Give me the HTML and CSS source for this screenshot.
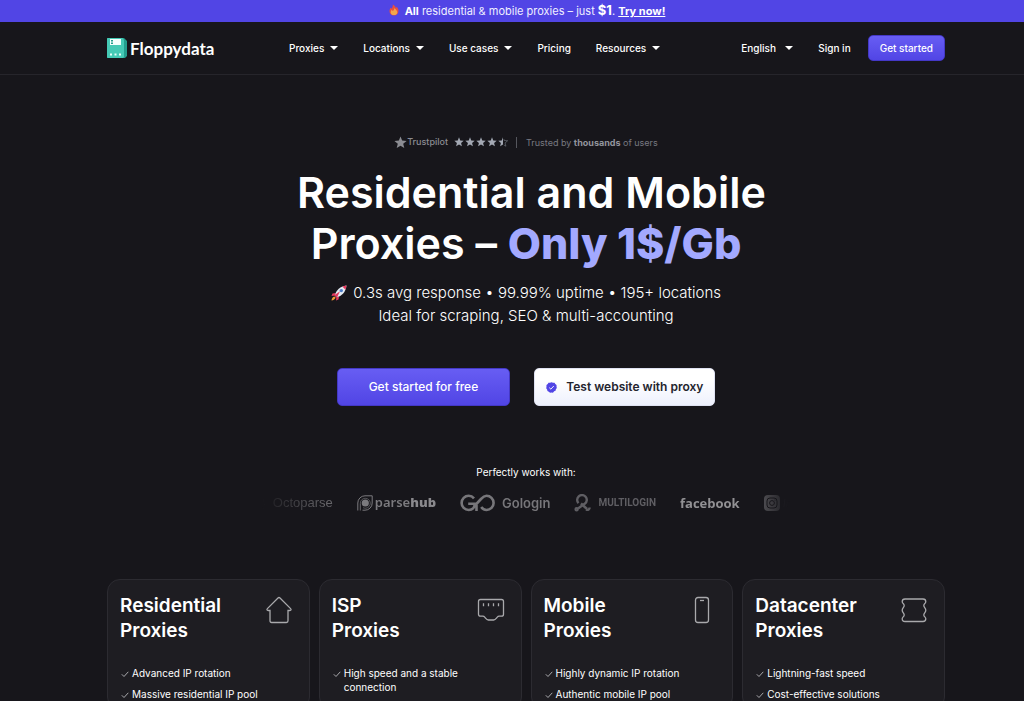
FILE: index.html
```html
<!DOCTYPE html>
<html lang="en">
<head>
<meta charset="utf-8">
<meta name="viewport" content="width=device-width, initial-scale=1">
<title>Floppydata – Residential and Mobile Proxies</title>
<link rel="stylesheet" href="styles.css">
</head>
<body>
<svg class="sprite" aria-hidden="true">
  <symbol id="star" viewBox="0 0 12 12"><path d="M6 .4l1.500 3.800 4.100.3-3.100 2.600 1 4L6 8.900l-3.500 2.200 1-4L.4 4.500l4.100-.3z"/></symbol>
  <symbol id="check" viewBox="0 0 8 8"><path d="M.8 4.300L3 6.500 7.300 1.800" fill="none" stroke="currentColor"/></symbol>
</svg>

<aside class="promo">
  <svg class="promo-icon" viewBox="0 0 12 14" aria-hidden="true">
    <path d="M4.500.5C7.500 2 8 3.500 8.200 5L9.300 3.200C11 5 11.700 7 11.200 9.500 10.700 12.300 8.500 13.500 6 13.500 3 13.500.8 11.700.6 8.800.5 7 1.200 5.300 1.800 4.200L2.900 5.600C4.200 4.200 4.900 2.600 4.500.5z" fill="#e8503e"/>
    <path d="M6.500 4.500C8.500 7 10.300 7.800 10 10.300 9.700 12.400 8 13.100 6 13.100 3.800 13.100 2 12 2 10 2 8.600 2.500 7.500 3.200 6.600L4.600 8.200C5.700 7.300 6.500 6.200 6.500 4.500z" fill="#f2a64b"/>
  </svg>
  <p><b>All</b> residential &amp; mobile proxies – just <b class="promo-price">$1</b>. <a href="#try">Try now!</a></p>
</aside>

<header class="header">
  <a class="logo" href="#home">
    <svg class="logo-mark" viewBox="0 0 20 20" aria-hidden="true">
      <path d="M0 1a1 1 0 0 1 1-1h16l3 3v15l-2 2H1a1 1 0 0 1-1-1z" fill="#249e8e"/>
      <path d="M0 1a1 1 0 0 1 1-1h14.500L17 2v17l-1 1H1a1 1 0 0 1-1-1z" fill="#45c9b5"/>
      <path d="M3 1h11v6H3z" fill="#f4fffd"/>
      <path d="M4 2h2v1.500H4zM4 4.500h2V6H4z" fill="#249e8e"/>
      <path d="M3 15.500h2v2H3zM7.500 15.500h2v2h-2zM12 15.500h2v2h-2z" fill="#e6fffa"/>
    </svg>
    <span>Floppydata</span>
  </a>
  <nav class="nav" aria-label="Main">
    <button class="nav-item has-menu" type="button">Proxies</button>
    <button class="nav-item has-menu" type="button">Locations</button>
    <button class="nav-item has-menu" type="button">Use cases</button>
    <a class="nav-item" href="#pricing">Pricing</a>
    <button class="nav-item has-menu" type="button">Resources</button>
  </nav>
  <div class="account">
    <div class="language has-menu">
      <select class="nav-item" aria-label="Language"><option>English</option></select>
    </div>
    <a class="nav-item" href="#signin">Sign in</a>
    <a class="btn btn-small btn-primary" href="#start">Get started</a>
  </div>
</header>

<main>
  <section class="hero">
    <div class="trust">
      <span class="trustpilot"><svg viewBox="0 0 12 12" aria-hidden="true"><use href="#star"/></svg>Trustpilot</span>
      <span class="stars" role="img" aria-label="4.5 out of 5 stars">
        <svg viewBox="0 0 12 12"><use href="#star"/></svg>
        <svg viewBox="0 0 12 12"><use href="#star"/></svg>
        <svg viewBox="0 0 12 12"><use href="#star"/></svg>
        <svg viewBox="0 0 12 12"><use href="#star"/></svg>
        <svg viewBox="0 0 12 12"><path d="M6 .4v8.500l-3.500 2.200 1-4L.4 4.500l4.100-.3z"/><path d="M7 2.500l.5 1.700 4.100.3-3.100 2.600 1 4L7 9.500" fill="none" stroke="currentColor" stroke-width=".7" opacity=".7"/></svg>
      </span>
      <span class="trust-text">Trusted by <b>thousands</b> of users</span>
    </div>
    <h1>&nbsp;Residential and Mobile<br>Proxies – <strong>Only 1$/Gb</strong></h1>
    <p class="lead">
      <svg class="rocket" viewBox="0 0 16 16" aria-hidden="true">
        <path d="M4.500 8L1.500 8.500.5 11 4 10.500zM8 11.500L7.500 14.500 5 15.500 5.500 12z" fill="#e5395f"/>
        <path d="M3.500 11.500C1.500 12 .7 13.500.5 15.600 2.500 15.300 4 14.500 4.600 12.600z" fill="#f39a35"/>
        <path d="M3.800 10.500C5 5.500 8.500 1.500 15.500.5 14.700 7.500 10.700 11 5.600 12.300z" fill="#e4ebf3"/>
        <path d="M11.300 1.500L15.500.5 14.600 4.700z" fill="#e5395f"/>
        <path d="M3.300 10.200L9 6.200 5.900 12.700z" fill="#e5395f"/>
        <circle cx="10.300" cy="5.600" r="1.700" fill="#4c7cc9"/>
      </svg>
      0.3s avg response • 99.99% uptime • 195+ locations<br>Ideal for scraping, SEO &amp; multi-accounting
    </p>
    <div class="actions">
      <a class="btn btn-large btn-primary" href="#start">Get started for free</a>
      <a class="btn btn-large btn-light" href="#test">
        <svg viewBox="0 0 12 12" aria-hidden="true"><path d="M6 .2l1.600.6 1.700 0 .8 1.500 1.400 1v1.700l.3 1.500-1 1.400-.4 1.600-1.500.7L7.600 11.700 6 11.400l-1.600.3-1.300-1.100-1.500-.7-.4-1.600-1-1.400.3-1.500V3.300l1.400-1L2.700.8l1.700 0z" fill="#5145e5"/><path d="M3.600 6.200l1.700 1.600 3.200-3.400" fill="none" stroke="#fff"/></svg>
        Test website with proxy
      </a>
    </div>
  </section>

  <section class="partners">
    <h2>Perfectly works with:</h2>
    <ul class="partner-list">
      <li class="octoparse">
        <svg width="6" height="16" viewBox="0 0 6 16" fill="none" stroke="currentColor" aria-hidden="true"><path d="M1 2.500l3 2-1 3M5 9l-3 2 2 3"/></svg>
        Octoparse
      </li>
      <li class="parsehub">
        <svg width="16" height="16" viewBox="0 0 16 16" fill="none" stroke="currentColor" aria-hidden="true"><path d="M.8 15.500V8A7.200 7.200 0 0 1 8 .8h7.200V8A7.200 7.200 0 0 1 8 15.200H5.500"/><path d="M3.300 15.500V8.500" stroke-width=".8"/><path d="M3.300 8.500A5 5 0 1 1 6 12.700" stroke-width=".6"/><circle cx="8.300" cy="8" r="3.600" fill="currentColor" stroke="none"/></svg>
        <span>parse<b>hub</b></span>
      </li>
      <li class="gologin">
        <svg width="35" height="18" viewBox="0 0 35 18" fill="none" stroke="currentColor" stroke-width="2.600" aria-hidden="true"><path d="M14 4.300C12.500 2.500 11 1.800 8.700 1.800a7 7 0 1 0 0 14.200c3.800 0 6-2.600 6-6.200H8.200M14 12.500l7-7.500c1.800-2 3.400-3.200 5.500-3.200a7.100 7.100 0 0 1 0 14.200c-2.500 0-4-1.200-5.300-3M16.500 9v8"/></svg>
        Gologin
      </li>
      <li class="multilogin">
        <svg width="17" height="18" viewBox="0 0 17 18" fill="none" stroke="currentColor" stroke-width="2.400" aria-hidden="true"><path d="M4.500 9.200A4.800 4.800 0 1 1 11 9.600L4 14.500"/><path d="M7 9.500l6 5.500"/><circle cx="2.600" cy="15.200" r="1"/><path d="M12 15.500c1.800.9 3.500 0 3.600-2"/></svg>
        MULTILOGIN
      </li>
      <li class="facebook">facebook</li>
      <li class="instagram">
        <svg width="16" height="16" viewBox="0 0 16 16" fill="none" aria-hidden="true"><rect width="16" height="16" rx="4" fill="currentColor"/><rect x="3" y="3" width="10" height="10" rx="3" stroke="#17161b"/><circle cx="8" cy="8" r="2.400" stroke="#17161b"/><circle cx="11" cy="5" r=".6" fill="#17161b"/></svg>
        <i>In</i>
      </li>
    </ul>
  </section>

  <section class="plans">
    <article class="card">
      <div class="card-head">
        <h3>Residential Proxies</h3>
        <svg viewBox="0 0 28 28" aria-hidden="true"><path d="M5 14.500H3.200c-1.400 0-1.600-1.100-.8-1.900L13 2c.7-.7 1.300-.7 2 0l10.600 10.600c.8.800.6 1.900-.8 1.900H23v10.300c0 1-.6 1.700-1.600 1.700H6.600c-1 0-1.600-.7-1.600-1.700z"/></svg>
      </div>
      <ul>
        <li><svg aria-hidden="true"><use href="#check"/></svg>Advanced IP rotation</li>
        <li><svg aria-hidden="true"><use href="#check"/></svg>Massive residential IP pool</li>
      </ul>
    </article>
    <article class="card">
      <div class="card-head">
        <h3>ISP<br>Proxies</h3>
        <svg viewBox="0 0 28 28" aria-hidden="true"><path d="M3.500 3.500h21c1.300 0 2 .7 2 2v12.700c0 1.300-.7 2-2 2h-2.200c-1.300 0-1.700.6-2.400 1.400-1 1.200-1.700 2.400-3.200 2.400h-5.400c-1.500 0-2.200-1.200-3.200-2.400-.7-.8-1.100-1.400-2.400-1.400H3.500c-1.300 0-2-.7-2-2V5.500c0-1.300.7-2 2-2z"/><path d="M6.500 7.300v3M11.500 7.300v3M16.500 7.300v3M21.500 7.300v3"/></svg>
      </div>
      <ul>
        <li><svg aria-hidden="true"><use href="#check"/></svg>High speed and a stable<br>connection</li>
      </ul>
    </article>
    <article class="card">
      <div class="card-head">
        <h3>Mobile Proxies</h3>
        <svg viewBox="0 0 28 28" aria-hidden="true"><rect x="7.500" y="1.500" width="13" height="25" rx="2.500"/><path d="M12 4.500h4"/></svg>
      </div>
      <ul>
        <li><svg aria-hidden="true"><use href="#check"/></svg>Highly dynamic IP rotation</li>
        <li><svg aria-hidden="true"><use href="#check"/></svg>Authentic mobile IP pool</li>
      </ul>
    </article>
    <article class="card">
      <div class="card-head">
        <h3>Datacenter Proxies</h3>
        <svg viewBox="0 0 28 28" aria-hidden="true"><path d="M5 3h18c2 0 2.800 1 2.800 2.700 0 1.700-2 2-2 3.800 0 2 2 2.200 2 4.700s-2 2.700-2 4.700c0 1.800 2 2.100 2 3.800 0 1.700-.8 2.800-2.800 2.800H5c-2 0-2.800-1.100-2.800-2.800 0-1.700 2-2 2-3.800 0-2-2-2.200-2-4.700s2-2.700 2-4.700c0-1.800-2-2.100-2-3.800C2.200 4 3 3 5 3z"/></svg>
      </div>
      <ul>
        <li><svg aria-hidden="true"><use href="#check"/></svg>Lightning-fast speed</li>
        <li><svg aria-hidden="true"><use href="#check"/></svg>Cost-effective solutions</li>
      </ul>
    </article>
  </section>
</main>
</body>
</html>
```
FILE: styles.css
```css
:root {
  --bg: #17161b;
  --line: #26252b;
  --accent: #5145e5;
  --page-left: 107px;
  --page-right: 79px;
}

* { box-sizing: border-box; }

body {
  margin: 0;
  background: var(--bg);
  color: #fff;
  font-family: Inter, "Liberation Sans", sans-serif;
  font-size: 10px;
  line-height: 14px;
  overflow-x: hidden;
}

h1, h2, h3, p, ul { margin: 0; padding: 0; }
ul { list-style: none; }
a { color: inherit; text-decoration: none; }
svg { flex: none; }
.sprite { display: none; }

.promo {
  display: flex;
  align-items: center;
  justify-content: center;
  gap: 6px;
  height: 22px;
  padding: 0 0 2px 30px;
  background: var(--accent);
  font-size: 11px;
  line-height: 20px;
  color: #f0efff;
}
.promo-icon { width: 10px; height: 12px; }
.promo b, .promo a { font-weight: 700; color: #fff; }
.promo .promo-price { font-size: 13px; }
.promo a { text-decoration: underline; }

.header {
  display: flex;
  align-items: center;
  height: 53px;
  padding: 0 var(--page-right) 0 var(--page-left);
  border-bottom: 1px solid var(--line);
}
.logo {
  display: flex;
  align-items: center;
  gap: 3px;
  width: 182px;
  font: 700 17px/20px Lato, sans-serif;
}
.logo span { padding-top: 2px; }
.logo-mark { width: 20px; height: 20px; }
.nav { display: flex; align-items: center; gap: 25px; }
.nav-item {
  padding: 0;
  border: 0;
  background: none;
  color: #fff;
  font: 500 10px/14px Inter, sans-serif;
  appearance: none;
}
.has-menu { display: flex; align-items: center; gap: 6px; }
.has-menu::after {
  content: "";
  width: 0;
  border: solid transparent;
  border-width: 4px 4px 0;
  border-top-color: #fff;
}
.account { display: flex; align-items: center; gap: 25px; margin-left: auto; }
.account .btn { margin-left: -8px; }
.language { gap: 9px; }

.btn {
  display: flex;
  align-items: center;
  justify-content: center;
  border-radius: 5px;
  font-weight: 500;
}
.btn-primary {
  border: 1px solid #4438c6;
  background: linear-gradient(#675df3, #5145e5);
}
.btn-light {
  gap: 9px;
  border: 1px solid #dfe2f2;
  background: linear-gradient(#fff 30%, #eef1fd);
  color: #24252e;
}
.btn-light svg { width: 11px; height: 11px; }
.btn-small { height: 26px; padding: 0 11px; }
.btn-large { height: 38px; padding: 0 11px; font-size: 12px; }
.btn-large.btn-primary { padding: 0 31px; }
.btn-light { font-weight: 600; }

.hero {
  display: flex;
  flex-direction: column;
  align-items: center;
  padding: 60px var(--page-right) 0 var(--page-left);
  text-align: center;
}
.trust {
  display: flex;
  align-items: center;
  gap: 6px;
  font-size: 9px;
  color: #777981;
}
.trust svg { fill: currentColor; }
.trustpilot {
  display: flex;
  align-items: center;
  color: #8b8c92;
  font-weight: 500;
}
.trustpilot svg { width: 13px; height: 13px; }
.stars { display: flex; gap: 1px; color: #a3a8b3; }
.stars svg { width: 10px; height: 10px; }
.trust-text {
  margin-left: 2px;
  padding-left: 9px;
  border-left: 1px solid #55565d;
  line-height: 11px;
}
.trust-text b { color: #92949d; }
h1 {
  margin-top: 18px;
  font-size: 43px;
  font-weight: 600;
  line-height: 51px;
}
h1 strong { font-weight: 800; color: #a3a9ff; }
.lead {
  margin-top: 12px;
  font-size: 15px;
  font-weight: 300;
  line-height: 23px;
}
.rocket { width: 16px; height: 16px; margin-right: 2px; vertical-align: -3px; }
.actions { display: flex; gap: 24px; margin-top: 41px; }

.partners {
  padding: 59px var(--page-right) 0 var(--page-left);
}
.partners h2 { font-size: 10px; font-weight: 400; line-height: 14px; text-align: center; }
.partner-list {
  display: flex;
  align-items: center;
  justify-content: center;
  gap: 24px;
  width: 528px;
  max-width: 100%;
  height: 22px;
  margin: 13px auto 0;
  color: #77767a;
  mask-image: linear-gradient(90deg, transparent, #000 12%, #000 91%, transparent);
}
.partner-list li { display: flex; align-items: center; gap: 7px; white-space: nowrap; }
.octoparse { font: 13px/16px "Liberation Sans", sans-serif; color: #656468; }
.partner-list .parsehub { gap: 2px; font: 600 13px/16px "Noto Sans", sans-serif; }
.parsehub { color: #7b7a7e; }
.parsehub span { padding-bottom: 3px; }
.parsehub b { color: #8a898d; }
.gologin { font: 600 13px/18px Inter, sans-serif; }
.multilogin { font: 700 10px/16px Roboto, sans-serif; color: #5f5e63; }
.facebook { font: 700 13px/16px "Open Sans", sans-serif; color: #929194; }
.partner-list .instagram { gap: 3px; font: 12px/16px Lato, sans-serif; }
.instagram i { opacity: .3; }

.plans {
  display: grid;
  grid-template-columns: repeat(4, 1fr);
  gap: 9px;
  padding: 65px var(--page-right) 0 var(--page-left);
}
.card {
  padding: 13px 13px 8px 12px;
  border: 1px solid #2c2b31;
  border-radius: 13px;
  background: #1e1d22;
}
.card-head {
  display: flex;
  align-items: flex-start;
  justify-content: space-between;
}
.card h3 {
  width: min-content;
  font-size: 19px;
  font-weight: 600;
  line-height: 25px;
}
.card-head svg {
  width: 28px;
  height: 28px;
  margin: 3px 3px 0 0;
  fill: none;
  stroke: #a9a9ac;
  stroke-width: 1.3;
}
.card ul { display: grid; gap: 7px; margin-top: 23px; }
.card li { display: flex; gap: 3px; }
.card li svg { width: 8px; height: 8px; margin: 4px 0 0 1px; color: #a9a9ac; }
```
